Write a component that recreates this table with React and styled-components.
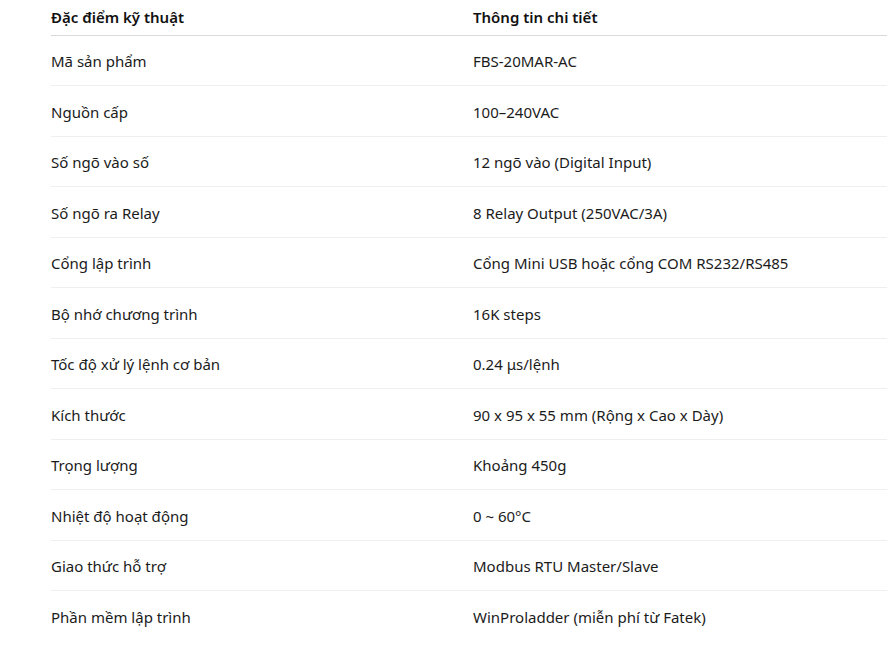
import styled, { createGlobalStyle } from 'styled-components';

const GlobalStyle = createGlobalStyle`
  html, body {
    margin: 0;
    padding: 0;
    background: #ffffff;
    overflow: hidden;
  }
  body {
    font-family: "Noto Sans", "Open Sans", Arial, sans-serif;
    color: #1b1b1b;
  }
`;

const Page = styled.div`
  width: 100vw;
  height: 100vh;
  overflow: hidden;
  padding-left: 51px;
  box-sizing: border-box;
`;

const SpecTable = styled.table`
  width: 844px;
  border-collapse: collapse;
  table-layout: fixed;
  font-size: 15px;
`;

const HeadCell = styled.th`
  text-align: left;
  font-weight: 600;
  padding: 5px 0 4px;
  line-height: 25.5px;
  border-bottom: 1px solid #d9d9d9;
  color: #111;
`;

const Row = styled.tr`
  border-bottom: 1px solid #efefef;
  &:last-child {
    border-bottom: none;
  }
`;

const Cell = styled.td`
  padding: 13.5px 0 10.5px;
  line-height: 25.5px;
  vertical-align: middle;
`;

const specs = [
  ['Mã sản phẩm', 'FBS-20MAR-AC'],
  ['Nguồn cấp', '100–240VAC'],
  ['Số ngõ vào số', '12 ngõ vào (Digital Input)'],
  ['Số ngõ ra Relay', '8 Relay Output (250VAC/3A)'],
  ['Cổng lập trình', 'Cổng Mini USB hoặc cổng COM RS232/RS485'],
  ['Bộ nhớ chương trình', '16K steps'],
  ['Tốc độ xử lý lệnh cơ bản', '0.24 μs/lệnh'],
  ['Kích thước', '90 x 95 x 55 mm (Rộng x Cao x Dày)'],
  ['Trọng lượng', 'Khoảng 450g'],
  ['Nhiệt độ hoạt động', '0 ~ 60°C'],
  ['Giao thức hỗ trợ', 'Modbus RTU Master/Slave'],
  ['Phần mềm lập trình', 'WinProladder (miễn phí từ Fatek)'],
];

export default function App() {
  return (
    <Page>
      <GlobalStyle />
      <SpecTable>
        <thead>
          <tr>
            <HeadCell>Đặc điểm kỹ thuật</HeadCell>
            <HeadCell>Thông tin chi tiết</HeadCell>
          </tr>
        </thead>
        <tbody>
          {specs.map(([name, value]) => (
            <Row key={name}>
              <Cell>{name}</Cell>
              <Cell>{value}</Cell>
            </Row>
          ))}
        </tbody>
      </SpecTable>
    </Page>
  );
}
